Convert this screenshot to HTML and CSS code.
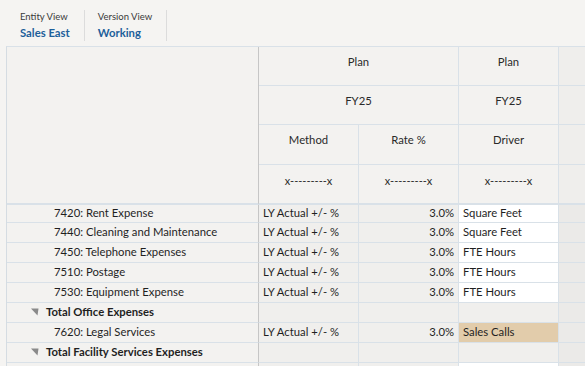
FILE: index.html
```html
<!DOCTYPE html>
<html>
<head>
<meta charset="utf-8">
<link rel="stylesheet" href="styles.css">
</head>
<body>
<div class="topbar">
  <div class="pov">
    <div class="pov-label">Entity View</div>
    <div class="pov-value">Sales East</div>
  </div>
  <div class="pov">
    <div class="pov-label">Version View</div>
    <div class="pov-value">Working</div>
  </div>
</div>
<div class="viewport">
<div class="grid">
  <div class="cell corner"></div>
  <div class="cell hdr span2 r1">Plan</div>
  <div class="cell hdr r1">Plan</div>
  <div class="cell hdr r1 blank"></div>

  <div class="cell hdr span2 r2">FY25</div>
  <div class="cell hdr r2">FY25</div>
  <div class="cell hdr r2 blank"></div>

  <div class="cell hdr r3">Method</div>
  <div class="cell hdr r3">Rate %</div>
  <div class="cell hdr r3">Driver</div>
  <div class="cell hdr r3 blank"></div>

  <div class="cell hdr r4 small">x---------x</div>
  <div class="cell hdr r4 small">x---------x</div>
  <div class="cell hdr r4 small">x---------x</div>
  <div class="cell hdr r4 blank"></div>

  <div class="cell label child first">7420: Rent Expense</div>
  <div class="cell data first">LY Actual +/- %</div>
  <div class="cell data num first">3.0%</div>
  <div class="cell data input first">Square Feet</div>
  <div class="cell data extra first"></div>

  <div class="cell label child">7440: Cleaning and Maintenance</div>
  <div class="cell data">LY Actual +/- %</div>
  <div class="cell data num">3.0%</div>
  <div class="cell data input">Square Feet</div>
  <div class="cell data extra"></div>

  <div class="cell label child">7450: Telephone Expenses</div>
  <div class="cell data">LY Actual +/- %</div>
  <div class="cell data num">3.0%</div>
  <div class="cell data input">FTE Hours</div>
  <div class="cell data extra"></div>

  <div class="cell label child">7510: Postage</div>
  <div class="cell data">LY Actual +/- %</div>
  <div class="cell data num">3.0%</div>
  <div class="cell data input">FTE Hours</div>
  <div class="cell data extra"></div>

  <div class="cell label child">7530: Equipment Expense</div>
  <div class="cell data">LY Actual +/- %</div>
  <div class="cell data num">3.0%</div>
  <div class="cell data input">FTE Hours</div>
  <div class="cell data extra"></div>

  <div class="cell label total"><svg class="tri" width="8" height="8" viewBox="0 0 8 8"><polygon points="0,0.5 7.5,0.5 6.5,7.5" fill="#8a8a8a"/></svg>Total Office Expenses</div>
  <div class="cell data"></div>
  <div class="cell data"></div>
  <div class="cell data"></div>
  <div class="cell data extra"></div>

  <div class="cell label child">7620: Legal Services</div>
  <div class="cell data">LY Actual +/- %</div>
  <div class="cell data num">3.0%</div>
  <div class="cell data changed">Sales Calls</div>
  <div class="cell data extra"></div>

  <div class="cell label total"><svg class="tri" width="8" height="8" viewBox="0 0 8 8"><polygon points="0,0.5 7.5,0.5 6.5,7.5" fill="#8a8a8a"/></svg>Total Facility Services Expenses</div>
  <div class="cell data"></div>
  <div class="cell data"></div>
  <div class="cell data"></div>
  <div class="cell data extra"></div>

  <div class="cell label"></div>
  <div class="cell data"></div>
  <div class="cell data"></div>
  <div class="cell data input"></div>
  <div class="cell data extra"></div>
</div>
</div>
</body>
</html>
```
FILE: styles.css
```css
* { box-sizing: border-box; }
html, body {
  margin: 0;
  padding: 0;
  width: 585px;
  height: 366px;
  overflow: hidden;
  background: #f5f4f2;
  font-family: Lato, "Noto Sans", "Liberation Sans", sans-serif;
  color: #1f1f1f;
}
.topbar {
  display: flex;
  height: 46px;
  padding: 10px 0 0 20px;
  background: #f5f4f2;
}
.pov {
  height: 31px;
  padding-right: 14px;
  margin-right: 13px;
  border-right: 1px solid #dcdcdc;
}
.pov-label {
  font-size: 9.5px;
  line-height: 14px;
  color: #3a3a3a;
}
.pov-value {
  font-size: 11.3px;
  font-weight: 700;
  line-height: 17px;
  color: #1d5f9a;
}
.viewport {
  width: 585px;
  overflow: hidden;
}
.grid {
  display: grid;
  grid-template-columns: 252px 100px 100px 100px 100px;
  grid-template-rows: 39px 39px 40px 40px 18px;
  grid-auto-rows: 20px;
  margin-left: 6px;
  border-top: 1px solid #d9e1e8;
  border-left: 1px solid #d5dce2;
  width: 653px;
}
.cell {
  border-right: 1px solid #d9e1e8;
  border-bottom: 1px solid #d9e1e8;
  font-size: 11.3px;
  line-height: 17px;
  white-space: nowrap;
  overflow: hidden;
}
.corner {
  grid-row: 1 / 5;
  grid-column: 1;
  background: #f3f2f0;
  border-right-color: #c6c6c6;
  border-bottom: 2px solid #d9e1e8;
}
.hdr {
  background: #f3f2f0;
  text-align: center;
  color: #2a2a2a;
  padding-top: 6px;
}
.span2 { grid-column: span 2; }
.r4 { border-bottom-width: 2px; padding-top: 7px; }
.small { font-size: 11px; }
.blank { background: #efeeec; }
.label {
  background: #f3f2f0;
  border-right-color: #c6c6c6;
}
.child { padding-left: 47px; }
.total {
  font-weight: 700;
  padding-left: 24px;
  display: flex;
  align-items: center;
  padding-bottom: 2px;
}
.tri { margin-right: 7px; }
.data {
  background: #f0efed;
  padding-left: 4px;
}
.num { text-align: right; padding-right: 4px; }
.input { background: #ffffff; }
.changed { background: #e2ccab; }
.extra { background: #ebeae8; }
.first { line-height: 16px; }
```
